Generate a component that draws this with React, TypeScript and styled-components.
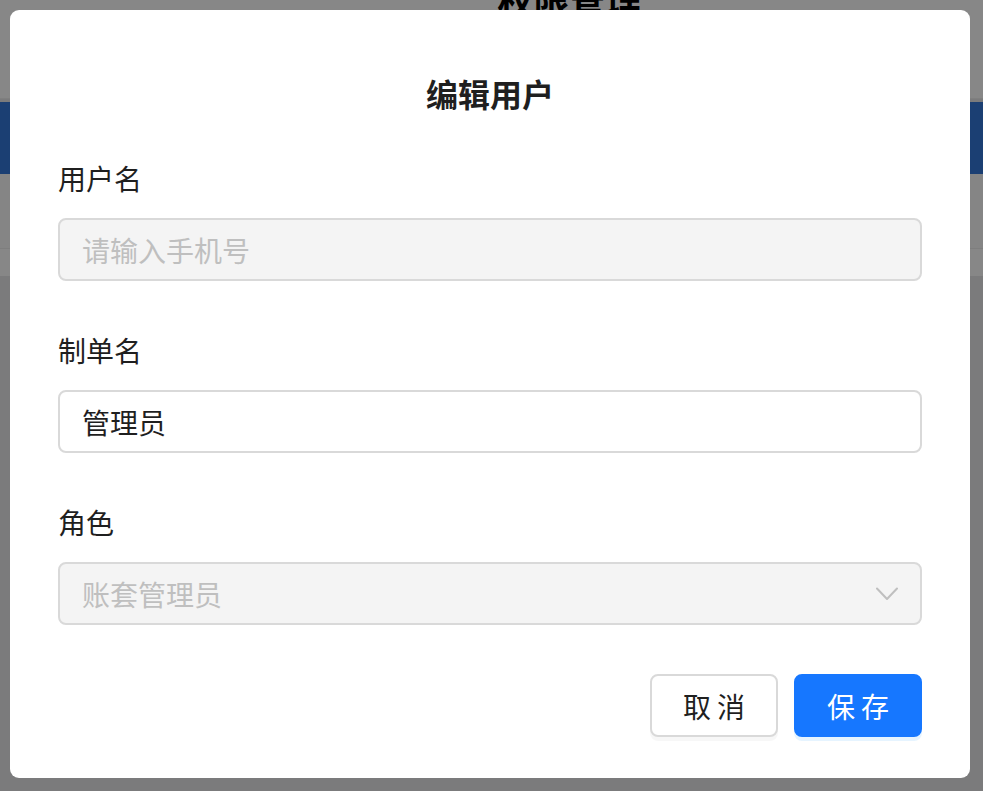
import React from "react";
import styled, { createGlobalStyle } from "styled-components";

const GlobalStyle = createGlobalStyle`
  html, body {
    margin: 0;
    padding: 0;
    height: 100%;
    overflow: hidden;
  }
  body {
    font-family: "Noto Sans CJK SC", "Noto Sans", sans-serif;
    background: #e8e9eb;
  }
`;

const Page = styled.div`
  width: 983px;
  height: 791px;
  background: #e8e9eb;
  display: flex;
  flex-direction: column;
`;

const Header = styled.header`
  height: 98px;
  background: #ffffff;
  border-bottom: 1px solid #f0f0f0;
  display: flex;
  justify-content: center;
  align-items: flex-start;
  overflow: hidden;
`;

const PageTitle = styled.h1`
  margin: -26px 0 0 156px;
  font-size: 36px;
  line-height: 50px;
  font-weight: 700;
  color: #000;
`;

const NavBar = styled.nav`
  height: 72px;
  margin-top: 3px;
  background: #3377d9;
`;

const Toolbar = styled.div`
  height: 74px;
  background: #fcfcfc;
  border-bottom: 1px solid #efefef;
`;

const SubBar = styled.div`
  height: 27px;
  background: #ffffff;
`;

const Overlay = styled.div`
  position: fixed;
  inset: 0;
  background: rgba(0, 0, 0, 0.47);
  display: flex;
  align-items: flex-start;
  padding: 10px;
  box-sizing: border-box;
`;

const Modal = styled.div`
  width: 960px;
  box-sizing: border-box;
  background: #ffffff;
  border-radius: 9px;
  padding: 63px 48px 41px;
  display: flex;
  flex-direction: column;
`;

const Title = styled.h2`
  margin: 0 0 47px;
  text-align: center;
  font-size: 32px;
  line-height: 40px;
  font-weight: 700;
  color: #1f1f1f;
`;

const Form = styled.div`
  display: flex;
  flex-direction: column;
  gap: 51px;
`;

const Field = styled.div`
  display: flex;
  flex-direction: column;
`;

const Label = styled.label`
  font-size: 28px;
  line-height: 36px;
  color: #1f1f1f;
  margin-bottom: 22px;
`;

const Input = styled.input<{ $disabled?: boolean }>`
  height: 63px;
  box-sizing: border-box;
  padding: 0 22px;
  border: 2px solid #d9d9d9;
  border-radius: 8px;
  font-family: inherit;
  font-size: 28px;
  color: #1f1f1f;
  background: ${(p) => (p.$disabled ? "#f4f4f4" : "#ffffff")};
  outline: none;

  &::placeholder {
    color: #bfbfbf;
  }
`;

const Select = styled.div`
  height: 63px;
  box-sizing: border-box;
  padding: 0 22px 0 22px;
  border: 2px solid #d9d9d9;
  border-radius: 8px;
  background: #f4f4f4;
  display: flex;
  align-items: center;
  justify-content: space-between;
  font-size: 28px;
  color: #bfbfbf;
`;

const Footer = styled.div`
  margin-top: 49px;
  display: flex;
  justify-content: flex-end;
  gap: 16px;
`;

const Button = styled.button<{ $primary?: boolean }>`
  height: 63px;
  width: 128px;
  box-sizing: border-box;
  border-radius: 8px;
  font-family: inherit;
  font-size: 28px;
  letter-spacing: 6px;
  padding: 0 0 0 6px;
  cursor: pointer;
  border: 2px solid ${(p) => (p.$primary ? "#1677ff" : "#d9d9d9")};
  background: ${(p) => (p.$primary ? "#1677ff" : "#ffffff")};
  color: ${(p) => (p.$primary ? "#ffffff" : "#1f1f1f")};
  box-shadow: ${(p) =>
    p.$primary ? "0 4px 0 rgba(5, 145, 255, 0.1)" : "0 4px 0 rgba(0, 0, 0, 0.03)"};
`;

const Chevron = () => (
  <svg width="22" height="14" viewBox="0 0 22 14" fill="none">
    <path d="M1 1.5 L11 12 L21 1.5" stroke="#bfbfbf" strokeWidth="2" strokeLinecap="round" strokeLinejoin="round" />
  </svg>
);

export default function App() {
  return (
    <>
      <GlobalStyle />
      <Page>
        <Header>
          <PageTitle>权限管理</PageTitle>
        </Header>
        <NavBar />
        <Toolbar />
        <SubBar />
      </Page>
      <Overlay>
        <Modal>
          <Title>编辑用户</Title>
          <Form>
            <Field>
              <Label>用户名</Label>
              <Input $disabled disabled placeholder="请输入手机号" />
            </Field>
            <Field>
              <Label>制单名</Label>
              <Input defaultValue="管理员" />
            </Field>
            <Field>
              <Label>角色</Label>
              <Select>
                <span>账套管理员</span>
                <Chevron />
              </Select>
            </Field>
          </Form>
          <Footer>
            <Button>取消</Button>
            <Button $primary>保存</Button>
          </Footer>
        </Modal>
      </Overlay>
    </>
  );
}
